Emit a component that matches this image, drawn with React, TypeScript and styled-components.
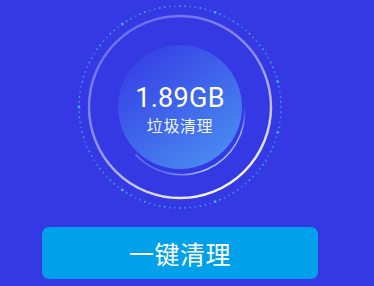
import React from "react";
import styled, { createGlobalStyle } from "styled-components";

const GlobalStyle = createGlobalStyle`
  html, body {
    margin: 0;
    padding: 0;
    background: #3439e3;
    font-family: Roboto, "Noto Sans CJK SC", sans-serif;
    overflow: hidden;
  }
`;

const Page = styled.div`
  width: 374px;
  height: 286px;
  display: flex;
  flex-direction: column;
  background: #3439e3;
`;

const Dial = styled.div`
  position: relative;
  width: 210px;
  height: 210px;
  margin: 2px 0 0 75px;
  display: flex;
  flex-direction: column;
  align-items: center;
  justify-content: center;
  color: #fff;
`;

const DialArt = styled.svg`
  position: absolute;
  inset: 0;
`;

const Amount = styled.div`
  position: relative;
  font-size: 27px;
  line-height: 32px;
  letter-spacing: 0.3px;
  margin-top: 4px;
`;

const Caption = styled.div`
  position: relative;
  font-size: 16px;
  line-height: 20px;
  letter-spacing: 0.6px;
  margin-top: 3px;
  color: rgba(255, 255, 255, 0.95);
`;

const CleanButton = styled.button`
  margin: 15px 0 0 42px;
  width: 276px;
  height: 52px;
  border: none;
  border-radius: 7px;
  background: #00a1ea;
  color: #fff;
  font-family: Roboto, "Noto Sans CJK SC", sans-serif;
  font-size: 25px;
  letter-spacing: 0.5px;
  padding: 0;
  cursor: pointer;
`;

const C = 105;
const DOTS = 124;

const dots = Array.from({ length: DOTS }, (_, i) => {
  const a = (i / DOTS) * Math.PI * 2;
  const bright = i % 19 === 5;
  return {
    x: C + Math.cos(a) * 101,
    y: C + Math.sin(a) * 101,
    r: bright ? 1.4 : 0.95,
    o: bright ? 1 : 0.65 + 0.2 * Math.sin(i * 1.7),
  };
});

const DialDrawing = () => (
  <DialArt width="210" height="210" viewBox="0 0 210 210">
    <defs>
      <linearGradient id="ring" x1="0.2" y1="0" x2="0.75" y2="1">
        <stop offset="0" stopColor="#fff" stopOpacity="0.25" />
        <stop offset="0.5" stopColor="#fff" stopOpacity="0.45" />
        <stop offset="1" stopColor="#fff" stopOpacity="1" />
      </linearGradient>
      <linearGradient id="core" x1="0.2" y1="0.1" x2="0.85" y2="0.95">
        <stop offset="0" stopColor="#3744e6" />
        <stop offset="1" stopColor="#4a8cf1" />
      </linearGradient>
      <linearGradient id="crescent" x1="0" y1="1" x2="1" y2="0">
        <stop offset="0" stopColor="#b8d6ff" stopOpacity="0" />
        <stop offset="0.35" stopColor="#b8d6ff" stopOpacity="0.9" />
        <stop offset="0.8" stopColor="#b8d6ff" stopOpacity="0.7" />
        <stop offset="1" stopColor="#b8d6ff" stopOpacity="0" />
      </linearGradient>
    </defs>
    {dots.map((d, i) => (
      <circle key={i} cx={d.x} cy={d.y} r={d.r} fill="#45b4f2" opacity={d.o} />
    ))}
    <circle cx={C} cy={C} r={91} fill="none" stroke="url(#ring)" strokeWidth="2.4" />
    <circle cx={C} cy={C} r={62} fill="url(#core)" />
    <path
      d={`M ${C - 45} ${C + 46} A 63 63 0 0 0 ${C + 64} ${C - 2}`}
      fill="none"
      stroke="url(#crescent)"
      strokeWidth="1.6"
      transform="translate(0.5 1.5)"
    />
  </DialArt>
);

export default function App() {
  return (
    <Page>
      <GlobalStyle />
      <Dial>
        <DialDrawing />
        <Amount>1.89GB</Amount>
        <Caption>垃圾清理</Caption>
      </Dial>
      <CleanButton type="button">一键清理</CleanButton>
    </Page>
  );
}
